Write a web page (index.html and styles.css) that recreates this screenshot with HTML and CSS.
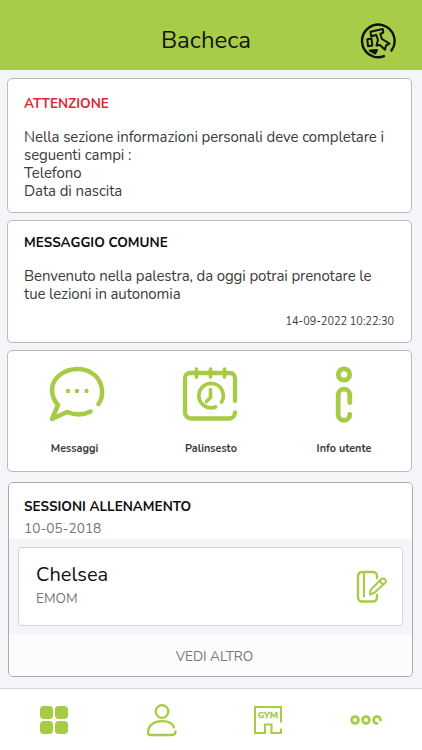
FILE: index.html
```html
<!DOCTYPE html>
<html lang="it">
<head>
<meta charset="utf-8">
<meta name="viewport" content="width=device-width, initial-scale=1">
<title>Bacheca</title>
<link rel="stylesheet" href="styles.css">
</head>
<body>
<div class="app">
  <header class="topbar">
    <h1 class="title">Bacheca</h1>
    <svg class="pin" viewBox="0 0 36 36">
      <path d="M31.500 27.500A16.300 16.300 0 1 0 24 33.200"/>
      <g class="inner">
        <path d="M10.500 8.800 22.800 6 23.300 9.500 20.300 11 22 16 29.500 20.700 26 22.500 25 26.700 20 22 16.500 22.500 18 17 16.300 12 11.200 13.300Z"/>
        <path d="M7.300 16.300 11.500 15.500 12.300 22.500 8 23.300Z"/>
        <path class="solid" d="M9.700 27.500 17 27 15.300 30.500Z"/>
      </g>
    </svg>
  </header>
  <main class="content">
    <section class="card alert">
      <h2 class="heading red">ATTENZIONE</h2>
      <p class="body">Nella sezione informazioni personali deve completare i<br>seguenti campi :<br>Telefono<br>Data di nascita</p>
    </section>
    <section class="card message">
      <h2 class="heading">MESSAGGIO COMUNE</h2>
      <p class="body">Benvenuto nella palestra, da oggi potrai prenotare le<br>tue lezioni in autonomia</p>
      <time class="time">14-09-2022 10:22:30</time>
    </section>
    <nav class="card shortcuts">
      <a class="shortcut messaggi">
        <svg width="58" height="58" viewBox="0 0 58 58"><path d="M50.500 38C54 33 55 26 53 19C50 9 40 3 30 3C16 3 4 12 4 24C4 30 6.500 35 10 39L4 53L19 46C27 49 36 49 42.500 45.500"/><g class="dots"><circle cx="20" cy="25" r="2.200"/><circle cx="29" cy="25" r="2.200"/><circle cx="38.500" cy="25" r="2.200"/></g></svg>
        <span>Messaggi</span>
      </a>
      <a class="shortcut palinsesto">
        <svg width="58" height="58" viewBox="0 0 58 58"><path class="frame" d="M54 35V12A5 5 0 0 0 49 7H9A5 5 0 0 0 4 12V46A6 6 0 0 0 10 52.500H48A6 6 0 0 0 54 46.500"/><path class="detail" d="M15.500 3V11M29.500 3V11M43.500 3V11M40.500 36A12.200 12.200 0 1 0 34.500 41M29.500 23.500V31.500L25.500 35.500"/></svg>
        <span>Palinsesto</span>
      </a>
      <a class="shortcut info">
        <svg width="18" height="58" viewBox="0 0 18 58"><circle cx="9" cy="8.500" r="5.700"/><path d="M14.800 36.500V29A5.800 5.800 0 0 0 3.200 29V48.500A5.800 5.800 0 0 0 14.800 48.500"/></svg>
        <span>Info utente</span>
      </a>
    </nav>
    <section class="card sessions">
      <div class="sessions-head">
        <h2 class="heading">SESSIONI ALLENAMENTO</h2>
        <div class="date">10-05-2018</div>
      </div>
      <div class="sessions-body">
        <article class="workout">
          <div>
            <h3 class="name">Chelsea</h3>
            <div class="type">EMOM</div>
          </div>
          <svg class="note" width="32" height="34" viewBox="0 0 32 34"><path d="M21 8V6A4 4 0 0 0 17 2H6A4 4 0 0 0 2 6V27.500A4 4 0 0 0 6 31.500H17A4 4 0 0 0 21 27.500V25"/><path class="thin" d="M8 3V26.500M14.500 20 25 9.300Q27 7.500 29 9.500T29 13L18 23 14 24.500ZM23.500 11 27 14.500"/></svg>
        </article>
      </div>
      <a class="more">VEDI ALTRO</a>
    </section>
  </main>
  <nav class="tabs">
    <a class="tab"><svg class="solid" width="28" height="28" viewBox="0 0 28 28"><rect width="13" height="13" rx="3.800"/><rect x="15" width="13" height="13" rx="3.800"/><rect y="15" width="13" height="13" rx="3.800"/><rect x="15" y="15" width="13" height="13" rx="3.800"/></svg></a>
    <a class="tab"><svg width="32" height="34" viewBox="0 0 32 34"><circle cx="16" cy="8.500" r="6.300"/><path d="M28 24.500C26.500 20.500 22 18.200 16 18.200C8 18.200 2 22.500 2 29.500Q2 32 4.500 32H26Q29.500 32 29.500 28.500"/></svg></a>
    <a class="tab gym"><svg width="30" height="30" viewBox="0 0 30 30"><path d="M28 17.500V2H2V28H12V19.500H18.500V28H28V23.500"/><text x="5" y="13" textLength="20" lengthAdjust="spacingAndGlyphs">GYM</text></svg></a>
    <a class="tab more-tab"><svg width="32" height="12" viewBox="0 0 32 12"><circle cx="5" cy="6" r="3.400"/><circle cx="16" cy="6" r="3.400"/><path d="M30.400 6A3.400 3.400 0 1 0 27 9.400"/></svg></a>
  </nav>
</div>
</body>
</html>
```
FILE: styles.css
```css
* { box-sizing: border-box; }
body { margin: 0; background: #f4f5f8; font-family: Nunito, Lato, "Noto Sans", sans-serif; color: #3b3b3b; }
h1, h2, h3, p { margin: 0; font-weight: 400; }
svg { display: block; fill: none; stroke: #a6cb45; stroke-width: 5; stroke-linecap: round; stroke-linejoin: round; flex: none; }
.app { width: 422px; height: 750px; display: flex; flex-direction: column; overflow: hidden; white-space: nowrap; }
.topbar { height: 70px; flex: none; background: #a7cd48; display: grid; grid-template-columns: 64px 1fr 74px; align-items: center; padding-top: 10px; }
.title { grid-column: 2; text-align: center; font-size: 24px; line-height: 34px; color: #141414; }
.pin { width: 36px; height: 36px; margin-left: 12px; margin-top: 2px; stroke: #111; stroke-width: 2.4; }
.pin .inner { stroke-width: 2; }
.pin .solid { fill: #111; }
.content { flex: 1; padding: 8px 9px 0 7px; display: flex; flex-direction: column; }
.card { border: 1px solid #b9babc; border-radius: 5px; background: #fff; width: 405px; overflow: hidden; flex: none; }
.heading { font-size: 13.5px; line-height: 18px; font-weight: 700; color: #0c0c0c; }
.red { color: #dd2832; }
.body { font-size: 15px; line-height: 18px; letter-spacing: -.09px; }
.alert { height: 135px; padding: 16px 16px 0; margin-bottom: 7px; }
.alert .body { margin-top: 15px; }
.message { height: 123px; padding: 13px 17px 0 16px; margin-bottom: 7px; display: flex; flex-direction: column; }
.message .body { margin-top: 15px; letter-spacing: -.12px; }
.time { align-self: flex-end; font-size: 10.9px; line-height: 16px; margin-top: 11px; }
.shortcuts { height: 122px; margin-bottom: 10px; padding: 15px 0 0; display: grid; grid-template-columns: 133px 140px 126px; }
.shortcut { display: flex; flex-direction: column; align-items: center; font-size: 10.8px; line-height: 16px; font-weight: 700; }
.shortcut span { margin-top: 17px; }
.messaggi svg { margin-left: 5px; stroke-width: 4.5; }
.palinsesto svg { margin-right: 2px; }
.palinsesto .frame { stroke-width: 4.3; }
.palinsesto .detail { stroke-width: 3.7; }
.info svg { stroke-width: 4.8; }
.dots { fill: #a6cb45; stroke: none; }
.sessions { height: 195px; margin-left: 1px; background: #f4f5f8; display: flex; flex-direction: column; border-color: #aaa; }
.sessions-head { height: 56px; flex: none; padding: 15px 15px 0; background: #fff; }
.date { font-size: 13.7px; line-height: 18px; margin-top: 4px; color: #777; }
.sessions-body { height: 95px; flex: none; padding: 8px 9px; }
.workout { height: 79px; border: 1px solid #d3d4d7; border-radius: 4px; background: #fff; padding: 13px 14px 0 17px; display: flex; justify-content: space-between; }
.name { font-size: 20px; line-height: 27px; color: #101010; }
.type { font-size: 13.6px; line-height: 18px; margin-top: 2px; color: #777; }
.note { margin-top: 9px; stroke-width: 2.4; }
.note .thin { stroke-width: 2; }
.more { flex: 1; background: #fcfcfd; text-align: center; font-size: 13.6px; line-height: 45px; color: #777; padding-left: 8px; }
.tabs { height: 62px; flex: none; border-top: 1px solid #d7d8da; background: #fff; display: grid; grid-template-columns: 107px 109px 104px 92px; align-items: center; padding-top: 1px; }
.tab { display: flex; justify-content: center; }
.tab svg { stroke-width: 2.3; }
.tab .solid { fill: #a6cb45; stroke: none; }
.more-tab svg { stroke-width: 2.8; }
.gym svg { stroke-width: 2; stroke-linecap: butt; stroke-linejoin: miter; }
.gym text { font: 900 8px Lato, sans-serif; fill: #a6cb45; stroke: #a6cb45; stroke-width: .3; }
```
